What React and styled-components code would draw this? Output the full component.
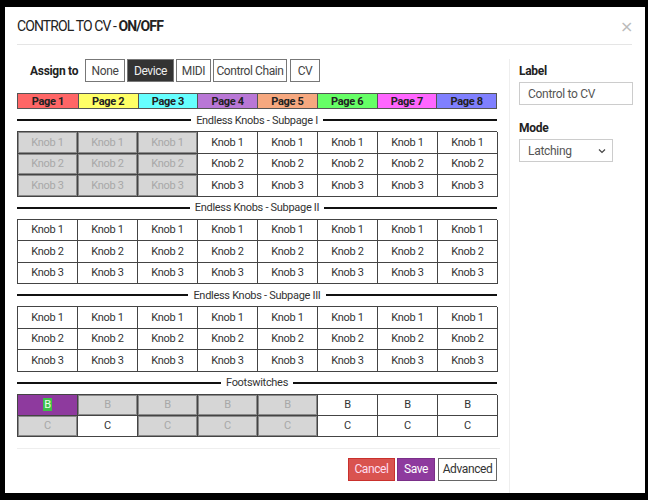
import React from "react";
import styled, { createGlobalStyle, css } from "styled-components";

const GlobalStyle = createGlobalStyle`
  html, body {
    margin: 0;
    background: #000;
  }
  body {
    font-family: "Roboto", "Liberation Sans", sans-serif;
    color: #333;
    letter-spacing: -0.3px;
  }
`;

const Modal = styled.div`
  margin: 7px 0 0 5px;
  width: 640px;
  height: 486px;
  background: #fff;
  display: flex;
  flex-direction: column;
  box-sizing: border-box;
`;

const Header = styled.div`
  margin: 0 13px 0 12px;
  height: 38px;
  border-bottom: 1px solid #e5e5e5;
  display: flex;
  align-items: center;
  justify-content: space-between;
  padding-top: 1px;
  box-sizing: border-box;
`;

const Title = styled.div`
  font-size: 14px;
  color: #222;
  letter-spacing: -0.9px;
  b {
    font-weight: bold;
  }
`;

const Close = styled.span`
  color: #bbb;
  font-size: 16px;
  margin-right: -1px;
  font-family: "DejaVu Sans", sans-serif;
`;

const Body = styled.div`
  flex: 1;
  display: flex;
`;

const Main = styled.div`
  width: 483px;
  margin-left: 12px;
  padding-top: 14px;
  display: flex;
  flex-direction: column;
`;

const Side = styled.div`
  margin-left: 9px;
  margin-top: 14px;
  border-left: 1px solid #eee;
  padding-left: 9px;
  display: flex;
  flex-direction: column;
`;

const AssignRow = styled.div`
  display: flex;
  align-items: center;
  gap: 2px;
  height: 23px;
`;

const AssignLabel = styled.span`
  font-weight: bold;
  font-size: 12px;
  color: #222;
  width: 53px;
  margin-left: 13px;
`;

const Btn = styled.button`
  font-family: inherit;
  letter-spacing: -0.4px;
  font-size: 12px;
  height: 23px;
  width: ${(p) => p.$w}px;
  padding: 0;
  border: 1px solid #777;
  background: ${(p) => (p.$active ? "#333" : "#fff")};
  color: ${(p) => (p.$active ? "#eee" : "#444")};
  margin-right: ${(p) => p.$mr || 0}px;
  box-sizing: border-box;
`;

const PageBar = styled.div`
  margin-top: 11px;
  width: 480px;
  display: grid;
  grid-template-columns: repeat(8, 1fr);
  border: 1px solid #555;
  box-sizing: border-box;
  height: 16px;
`;

const Page = styled.div`
  background: ${(p) => p.$color};
  border-left: ${(p) => (p.$first ? "none" : "1px solid #555")};
  font-size: 11px;
  font-weight: bold;
  color: #222;
  display: flex;
  align-items: center;
  justify-content: center;
`;

const SectionTitle = styled.div`
  width: 480px;
  height: 22px;
  display: flex;
  align-items: center;
  gap: 5px;
  font-size: 11px;
  color: #333;
  &::before,
  &::after {
    content: "";
    flex: 1;
    height: 2px;
    background: #111;
  }
`;

const Grid = styled.div`
  width: 480px;
  display: grid;
  grid-template-columns: repeat(8, 60px);
  border-top: 1px solid #444;
  border-left: 1px solid #444;
  box-sizing: border-box;
`;

const Cell = styled.div`
  height: ${(p) => p.$h || 21.5}px;
  box-sizing: border-box;
  border-right: 1px solid #444;
  border-bottom: 1px solid #444;
  font-size: 11px;
  display: flex;
  align-items: center;
  justify-content: center;
  color: #333;
  background: #fff;
  ${(p) =>
    p.$off &&
    css`
      background: #d6d6d6;
      color: #a8a8a8;
      box-shadow: inset 0 0 0 1px #8a8a8a;
    `}
  ${(p) =>
    p.$sel &&
    css`
      background: #8e3a9e;
      color: #fff;
    `}
`;

const Hl = styled.span`
  background: #3fbf4a;
  color: #eaffea;
  padding: 0 1px;
`;

const Footer = styled.div`
  margin-top: 11px;
  border-top: 1px solid #eee;
  padding-top: 9px;
  padding-right: 3px;
  display: flex;
  justify-content: flex-end;
  gap: 2px;
`;

const ActionBtn = styled.button`
  font-family: inherit;
  letter-spacing: -0.4px;
  font-size: 12px;
  height: 23px;
  width: ${(p) => p.$w}px;
  padding: 0;
  box-sizing: border-box;
  ${(p) =>
    p.$kind === "cancel"
      ? css`
          background: #d9534f;
          border: 1px solid #c9302c;
          color: #fde;
        `
      : p.$kind === "save"
      ? css`
          background: #8e3a9e;
          border: 1px solid #7a2f88;
          color: #fff;
        `
      : css`
          background: #fff;
          border: 1px solid #666;
          color: #333;
          margin-left: 1px;
        `}
`;

const FieldLabel = styled.div`
  font-weight: bold;
  font-size: 12px;
  color: #222;
  height: 23px;
  display: flex;
  align-items: center;
`;

const Input = styled.div`
  width: 114px;
  height: 23px;
  box-sizing: border-box;
  border: 1px solid #ccc;
  font-size: 12px;
  color: #555;
  display: flex;
  align-items: center;
  padding-left: 8px;
  margin-bottom: 11px;
`;

const Select = styled.div`
  width: 94px;
  height: 23px;
  box-sizing: border-box;
  border: 1px solid #ccc;
  font-size: 12px;
  color: #555;
  display: flex;
  align-items: center;
  justify-content: space-between;
  padding: 0 6px 0 8px;
`;

const pages = ["#ff6666", "#ffff66", "#66ffff", "#b977d6", "#f6a87f", "#66ff66", "#ff66ff", "#8080ff"];

const KnobTable = ({ off }) => (
  <Grid>
    {[1, 2, 3].map((r) =>
      Array.from({ length: 8 }, (_, c) => (
        <Cell key={`${r}-${c}`} $off={off && c < 3}>
          Knob {r}
        </Cell>
      ))
    )}
  </Grid>
);

const footB = [0, 1, 1, 1, 1, 0, 0, 0];
const footC = [1, 0, 1, 1, 1, 0, 0, 0];

export default function App() {
  return (
    <>
      <GlobalStyle />
      <Modal>
        <Header>
          <Title>
            CONTROL TO CV - <b>ON/OFF</b>
          </Title>
          <Close>×</Close>
        </Header>
        <Body>
          <Main>
            <AssignRow>
              <AssignLabel>Assign to</AssignLabel>
              <Btn $w={40}>None</Btn>
              <Btn $active $w={47}>Device</Btn>
              <Btn $w={35}>MIDI</Btn>
              <Btn $w={74} $mr={1}>Control Chain</Btn>
              <Btn $w={30}>CV</Btn>
            </AssignRow>
            <PageBar>
              {pages.map((c, i) => (
                <Page key={i} $color={c} $first={i === 0}>
                  Page {i + 1}
                </Page>
              ))}
            </PageBar>
            <SectionTitle>Endless Knobs - Subpage I</SectionTitle>
            <KnobTable off />
            <SectionTitle>Endless Knobs - Subpage II</SectionTitle>
            <KnobTable />
            <SectionTitle>Endless Knobs - Subpage III</SectionTitle>
            <KnobTable />
            <SectionTitle>Footswitches</SectionTitle>
            <Grid>
              {footB.map((o, i) => (
                <Cell key={`b${i}`} $h={21} $off={!!o} $sel={i === 0}>
                  {i === 0 ? <Hl>B</Hl> : "B"}
                </Cell>
              ))}
              {footC.map((o, i) => (
                <Cell key={`c${i}`} $h={21} $off={!!o}>
                  C
                </Cell>
              ))}
            </Grid>
            <Footer>
              <ActionBtn $kind="cancel" $w={47}>Cancel</ActionBtn>
              <ActionBtn $kind="save" $w={38}>Save</ActionBtn>
              <ActionBtn $w={59}>Advanced</ActionBtn>
            </Footer>
          </Main>
          <Side>
            <FieldLabel>Label</FieldLabel>
            <Input>Control to CV</Input>
            <FieldLabel>Mode</FieldLabel>
            <Select>
              Latching
              <svg width="8" height="6" viewBox="0 0 8 6">
                <path d="M1 1.5 L4 4.5 L7 1.5" fill="none" stroke="#444" strokeWidth="1.2" />
              </svg>
            </Select>
          </Side>
        </Body>
      </Modal>
    </>
  );
}
